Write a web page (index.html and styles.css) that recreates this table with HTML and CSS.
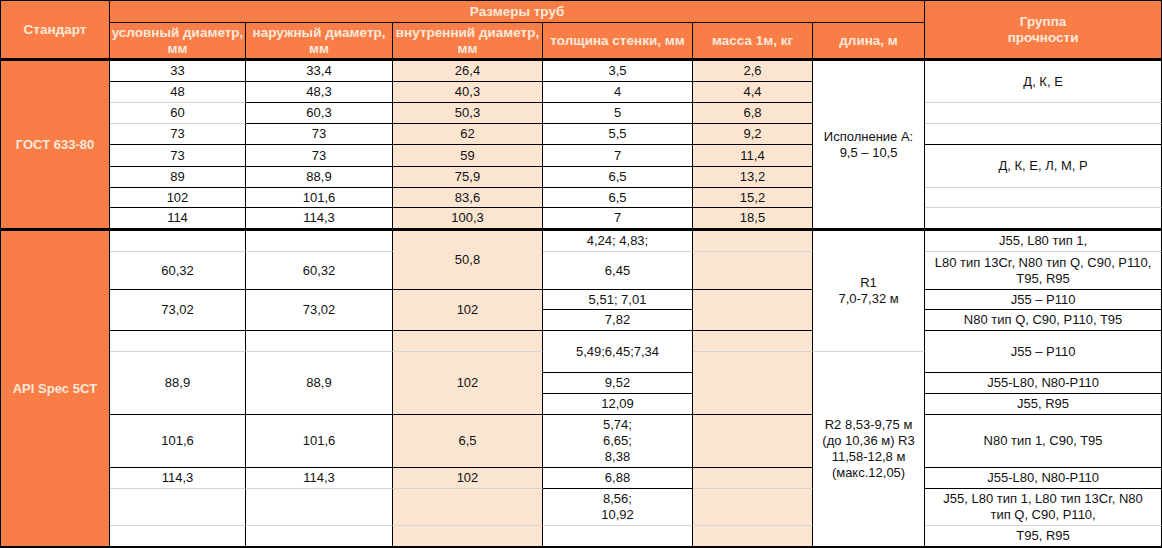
FILE: index.html
```html
<!DOCTYPE html>
<html lang="ru">
<head>
<meta charset="utf-8">
<title>Размеры труб</title>
<link rel="stylesheet" href="styles.css">
</head>
<body>
<table class="pipes">
  <colgroup>
    <col class="w-std"><col class="w-nom"><col class="w-out"><col class="w-in"><col class="w-wall"><col class="w-mass"><col class="w-len"><col class="w-grp">
  </colgroup>
  <thead>
    <tr class="h-top">
      <th rowspan="2" class="thick">Стандарт</th>
      <th colspan="6">Размеры труб</th>
      <th rowspan="2" class="thick">Группа<br>прочности</th>
    </tr>
    <tr class="h-sub">
      <th class="thick">условный диаметр,<br>мм</th>
      <th class="thick">наружный диаметр,<br>мм</th>
      <th class="thick">внутренний диаметр,<br>мм</th>
      <th class="thick">толщина стенки, мм</th>
      <th class="thick">масса 1м, кг</th>
      <th class="thick">длина, м</th>
    </tr>
  </thead>
  <tbody>
    <tr class="r21">
      <th rowspan="8" class="std thick">ГОСТ 633-80</th>
      <td>33</td><td>33,4</td><td class="pe">26,4</td><td>3,5</td><td class="pe">2,6</td>
      <td rowspan="8" class="thick">Исполнение А:<br>9,5 – 10,5</td>
      <td rowspan="2" class="g">Д, К, Е</td>
    </tr>
    <tr class="r21">
      <td class="g">48</td><td>48,3</td><td class="pe">40,3</td><td>4</td><td class="pe">4,4</td>
    </tr>
    <tr class="r21">
      <td class="g">60</td><td>60,3</td><td class="pe">50,3</td><td>5</td><td class="pe">6,8</td>
      <td class="g"></td>
    </tr>
    <tr class="r21">
      <td>73</td><td>73</td><td class="pe">62</td><td>5,5</td><td class="pe">9,2</td>
      <td></td>
    </tr>
    <tr class="r22">
      <td>73</td><td>73</td><td class="pe">59</td><td>7</td><td class="pe">11,4</td>
      <td rowspan="2" class="g">Д, К, Е, Л, М, Р</td>
    </tr>
    <tr class="r21">
      <td>89</td><td>88,9</td><td class="pe">75,9</td><td>6,5</td><td class="pe">13,2</td>
    </tr>
    <tr class="r20">
      <td>102</td><td>101,6</td><td class="pe">83,6</td><td>6,5</td><td class="pe">15,2</td>
      <td class="g"></td>
    </tr>
    <tr class="r23">
      <td class="thick">114</td><td class="thick">114,3</td><td class="pe thick">100,3</td><td class="thick">7</td><td class="pe thick">18,5</td>
      <td class="thick"></td>
    </tr>

    <tr class="r21">
      <th rowspan="12" class="std thick">API Spec 5CT</th>
      <td class="g"></td><td class="g"></td>
      <td rowspan="2" class="pe">50,8</td>
      <td class="g">4,24; 4,83;</td>
      <td class="pe g"></td>
      <td rowspan="5" class="g">R1<br>7,0-7,32 м</td>
      <td class="g">J55, L80 тип 1,</td>
    </tr>
    <tr class="r38">
      <td>60,32</td><td>60,32</td><td>6,45</td><td class="pe"></td>
      <td>L80 тип 13Cr, N80 тип Q, C90, P110,<br>T95, R95</td>
    </tr>
    <tr class="r20">
      <td rowspan="2">73,02</td><td rowspan="2">73,02</td><td rowspan="2" class="pe">102</td>
      <td>5,51; 7,01</td>
      <td rowspan="2" class="pe"></td>
      <td>J55 – P110</td>
    </tr>
    <tr class="r21">
      <td>7,82</td>
      <td>N80 тип Q, C90, P110, T95</td>
    </tr>
    <tr class="r21">
      <td class="g"></td><td class="g"></td><td class="pe g"></td>
      <td rowspan="2">5,49;6,45;7,34</td>
      <td class="pe g"></td>
      <td rowspan="2">J55 – P110</td>
    </tr>
    <tr class="r21">
      <td rowspan="3">88,9</td><td rowspan="3">88,9</td><td rowspan="3" class="pe">102</td>
      <td rowspan="3" class="pe"></td>
      <td rowspan="7" class="thick">R2 8,53-9,75 м<br>(до 10,36 м) R3<br>11,58-12,8 м<br>(макс.12,05)</td>
    </tr>
    <tr class="r21">
      <td>9,52</td>
      <td>J55-L80, N80-P110</td>
    </tr>
    <tr class="r21">
      <td>12,09</td>
      <td>J55, R95</td>
    </tr>
    <tr class="r53">
      <td>101,6</td><td>101,6</td><td class="pe">6,5</td>
      <td>5,74;<br>6,65;<br>8,38</td>
      <td class="pe"></td>
      <td>N80 тип 1, C90, T95</td>
    </tr>
    <tr class="r21">
      <td class="g">114,3</td><td class="g">114,3</td><td class="pe g">102</td>
      <td>6,88</td>
      <td class="pe g"></td>
      <td>J55-L80, N80-P110</td>
    </tr>
    <tr class="r37">
      <td class="g"></td><td class="g"></td><td class="pe g"></td>
      <td class="g">8,56;<br>10,92</td>
      <td class="pe g"></td>
      <td class="g">J55, L80 тип 1, L80 тип 13Cr, N80<br>тип Q, C90, P110,</td>
    </tr>
    <tr class="r23">
      <td class="thick"></td><td class="thick"></td><td class="pe thick"></td>
      <td class="thick"></td><td class="pe thick"></td>
      <td class="thick">T95, R95</td>
    </tr>
  </tbody>
</table>
</body>
</html>
```

FILE: styles.css
```css
html, body {
  margin: 0;
  padding: 0;
  background: #ffffff;
}

.pipes {
  width: 1162px;
  table-layout: fixed;
  border-collapse: separate;
  border-spacing: 0;
  border-left: 1px solid #000;
  border-top: 1px solid #000;
  font-family: "Liberation Sans", Arial, sans-serif;
  font-size: 13px;
  line-height: 16px;
  color: #111;
}

.w-std { width: 109px; }
.w-nom { width: 136px; }
.w-out { width: 147px; }
.w-in { width: 150px; }
.w-wall { width: 150px; }
.w-mass { width: 120px; }
.w-len { width: 112px; }
.w-grp { width: 237px; }

.pipes th,
.pipes td {
  box-sizing: border-box;
  padding: 0;
  text-align: center;
  vertical-align: middle;
  white-space: nowrap;
  border-right: 1px solid #000;
  border-bottom: 1px solid #000;
  background: #ffffff;
}

.pipes th {
  background: #f97d46;
  color: #fde9da;
  font-weight: bold;
  font-size: 13.5px;
}

.pipes .std {
  font-size: 13px;
}

.pipes .pe {
  background: #fbe5d1;
}

.pipes .g {
  border-bottom-color: #d4d4d4;
}

.pipes .thick {
  border-bottom: 3px solid #000;
}

.h-top { height: 22px; }
.h-sub { height: 38px; }
.r20 { height: 20px; }
.r21 { height: 21px; }
.r22 { height: 22px; }
.r23 { height: 23px; }
.r37 { height: 37px; }
.r38 { height: 38px; }
.r53 { height: 53px; }
```
